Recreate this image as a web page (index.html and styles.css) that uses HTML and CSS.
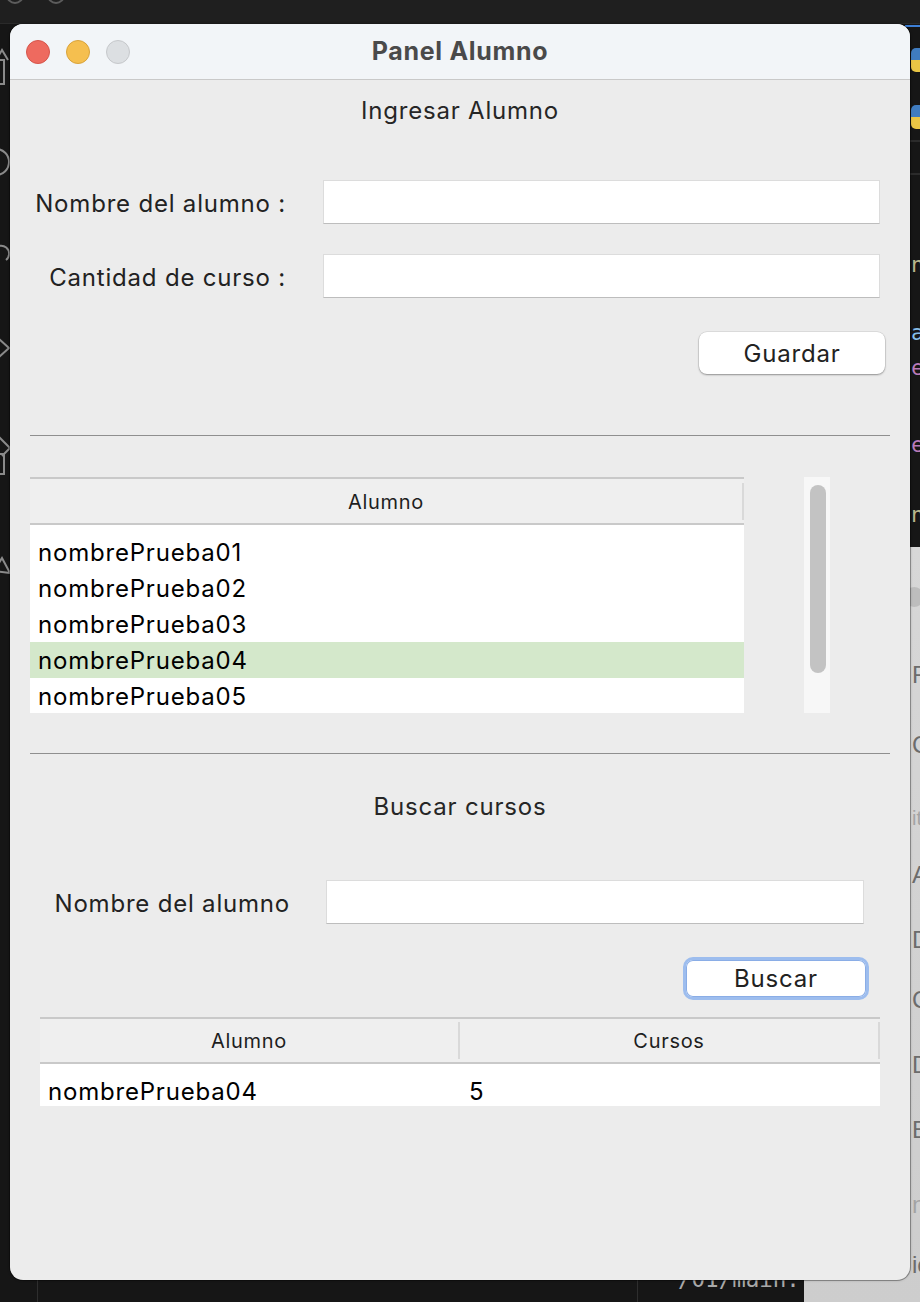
FILE: index.html
```html
<!DOCTYPE html>
<html lang="es">
<head>
<meta charset="utf-8">
<title>Panel Alumno</title>
<link rel="stylesheet" href="styles.css">
</head>
<body>
<div class="desktop">
  <div class="topstrip"></div>
  <svg class="topdots" width="80" height="6" viewBox="0 0 80 6"><circle cx="15" cy="-5" r="8" fill="none" stroke="#5c5c5c" stroke-width="2"/><circle cx="56" cy="-5" r="8" fill="none" stroke="#5c5c5c" stroke-width="2"/></svg>
  <svg class="activity" width="12" height="600" viewBox="0 0 12 600">
    <g fill="none" stroke="#8a8a8a" stroke-width="2">
      <path d="M-4 36 L2 26 L8 36"/>
      <rect x="-8" y="36" width="12" height="24"/>
      <circle cx="-4" cy="138" r="13"/>
      <path d="M-6 226 A8 8 0 1 1 6 236"/>
      <path d="M-2 314 L9 324 L-2 334"/>
      <path d="M-2 412 L10 424 L2 432"/>
      <rect x="-8" y="430" width="12" height="20"/>
      <path d="M-6 547 L2 534 L10 549 Z"/>
    </g>
  </svg>
  <div class="tabline"></div>
  <div class="pyicon pyicon-a"><span class="py-blue"></span><span class="py-yellow"></span></div>
  <div class="pyicon pyicon-b"><span class="py-blue"></span><span class="py-yellow"></span></div>
  <div class="edline edline-a"></div>
  <div class="edline edline-b"></div>
  <span class="code c-olive c1">n</span>
  <span class="code c-blue c2">a</span>
  <span class="code c-purple c3">e</span>
  <span class="code c-purple c4">e</span>
  <span class="code c-olive c5">n</span>
  <div class="vline vline-a"></div>
  <div class="vline vline-b"></div>
  <span class="term">/01/main.</span>
  <div class="sidepanel">
    <span class="sp-dot"></span>
    <span class="sp s1">F</span>
    <span class="sp s2">C</span>
    <span class="sp sp-light s3">it</span>
    <span class="sp s4">A</span>
    <span class="sp s5">D</span>
    <span class="sp s6">C</span>
    <span class="sp s7">D</span>
    <span class="sp s8">E</span>
    <span class="sp sp-light s9">nc</span>
    <span class="sp s10">ic</span>
  </div>

  <div class="window">
    <div class="titlebar">
      <div class="lights">
        <span class="light light-close"></span>
        <span class="light light-min"></span>
        <span class="light light-max"></span>
      </div>
      <div class="title">Panel Alumno</div>
      <div></div>
    </div>
    <div class="content">
      <div class="section-title">Ingresar Alumno</div>

      <div class="form-row form-row-first">
        <label class="label">Nombre del alumno :</label>
        <div class="input"></div>
      </div>
      <div class="form-row form-row-second">
        <label class="label">Cantidad de curso :</label>
        <div class="input"></div>
      </div>
      <div class="actions actions-save">
        <div class="btn">Guardar</div>
      </div>

      <div class="sep sep-first"></div>

      <div class="list-area">
        <div class="table table-list">
          <div class="thead">
            <div class="th th-full">Alumno</div>
          </div>
          <div class="tbody tbody-list">
            <div class="row">nombrePrueba01</div>
            <div class="row">nombrePrueba02</div>
            <div class="row">nombrePrueba03</div>
            <div class="row row-selected">nombrePrueba04</div>
            <div class="row">nombrePrueba05</div>
          </div>
        </div>
        <div class="track"><div class="thumb"></div></div>
      </div>

      <div class="sep sep-second"></div>

      <div class="section-title section-title-search">Buscar cursos</div>

      <div class="form-row form-row-search">
        <label class="label">Nombre del alumno</label>
        <div class="input"></div>
      </div>
      <div class="actions actions-search">
        <div class="btn btn-focus">Buscar</div>
      </div>

      <div class="table table-result">
        <div class="thead">
          <div class="th th-half">Alumno</div>
          <div class="th th-half">Cursos</div>
        </div>
        <div class="tbody tbody-result">
          <div class="row row-cells">
            <span class="cell cell-name">nombrePrueba04</span>
            <span class="cell cell-count">5</span>
          </div>
        </div>
      </div>
    </div>
  </div>
</div>
</body>
</html>
```
FILE: styles.css
```css
* { box-sizing: border-box; }
html, body { margin: 0; padding: 0; }
body { background: #151515; overflow: hidden; }

.desktop {
  position: relative;
  width: 920px;
  height: 1302px;
  background: #161616;
  overflow: hidden;
  font-family: Inter, "Liberation Sans", sans-serif;
}
.topstrip { height: 24px; background: #1f1f1f; border-bottom: 1px solid #2a2a2a; }
.topdots { position: absolute; left: 0; top: 0; }
.activity { position: absolute; left: 0; top: 24px; }

.tabline { position: absolute; left: 905px; top: 25px; width: 15px; height: 2px; background: #3d7fd6; }
.pyicon { position: absolute; left: 911px; width: 14px; display: flex; flex-direction: column; }
.pyicon-a { top: 48px; }
.pyicon-b { top: 105px; }
.py-blue { height: 12px; background: #3f7cc0; border-radius: 5px 5px 0 0; }
.py-yellow { height: 12px; background: #e9c545; border-radius: 0 0 5px 5px; }
.edline { position: absolute; left: 910px; width: 10px; height: 2px; background: #2b2b2b; }
.edline-a { top: 140px; }
.edline-b { top: 173px; }
.code { position: absolute; left: 911px; font-family: "DejaVu Sans Mono", monospace; font-size: 22px; line-height: 24px; }
.c-olive { color: #b7b58c; }
.c-blue { color: #86bde8; }
.c-purple { color: #b97ab9; }
.c1 { top: 253px; }
.c2 { top: 321px; }
.c3 { top: 356px; }
.c4 { top: 433px; }
.c5 { top: 503px; }

.vline { position: absolute; top: 900px; bottom: 0; width: 1px; background: #2e2e2e; }
.vline-a { left: 37px; }
.vline-b { left: 637px; }
.term {
  position: absolute; left: 678px; top: 1264px;
  font-family: "DejaVu Sans Mono", monospace; font-size: 22.5px; line-height: 30px;
  color: #a9a9a9;
}

.sidepanel {
  position: absolute; left: 804px; top: 547px; right: 0; bottom: 0;
  background: linear-gradient(180deg, #d7d7d7, #cdcdcd);
}
.sp-dot { position: absolute; left: 100px; top: 40px; width: 20px; height: 20px; border-radius: 50%; background: #bdbdbd; }
.sp { position: absolute; left: 108px; font-family: "Liberation Sans", sans-serif; font-size: 24px; line-height: 28px; color: #6c6c6c; }
.sp-light { color: #a3a3a3; }
.s1 { top: 114px; }
.s2 { top: 184px; }
.s3 { top: 257px; font-size: 20px; }
.s4 { top: 314px; }
.s5 { top: 379px; }
.s6 { top: 439px; }
.s7 { top: 504px; }
.s8 { top: 569px; }
.s9 { top: 644px; }
.s10 { top: 704px; }

/* Window */
.window {
  position: absolute;
  left: 10px; top: 24px;
  width: 900px; height: 1256px;
  background: #ececec;
  border-radius: 13px;
  overflow: hidden;
  box-shadow: 0 0 0 1px rgba(0,0,0,0.28), 0 0 3px rgba(0,0,0,0.35);
}
.titlebar {
  height: 56px;
  background: #f2f5f8;
  border-bottom: 1px solid #c9c9c9;
  display: grid;
  grid-template-columns: 1fr auto 1fr;
  align-items: center;
}
.lights { display: flex; gap: 16px; padding-left: 16px; }
.light { width: 24px; height: 24px; border-radius: 50%; }
.light-close { background: #ee6a5f; border: 1px solid #d6554b; }
.light-min { background: #f5bf4f; border: 1px solid #d9a33b; }
.light-max { background: #dcdfe2; border: 1px solid #c6c8cb; }
.title {
  font-size: 25px; font-weight: 700; color: #4a4a4a;
  letter-spacing: 0.7px;
  padding-bottom: 2px;
}

.content { color: #222222; font-size: 24px; letter-spacing: 0.8px; }

.section-title {
  margin-top: 15px;
  height: 30px; line-height: 32px;
  text-align: center;
  color: #262626;
}
.section-title-search { margin-top: 37px; }

.form-row {
  display: grid;
  grid-template-columns: 256px 557px;
  column-gap: 37px;
  align-items: center;
  padding-left: 20px;
  height: 44px;
}
.form-row-first { margin-top: 55px; }
.form-row-second { margin-top: 30px; }
.form-row-search {
  margin-top: 59px;
  grid-template-columns: 260px 538px;
  column-gap: 36px;
}
.label { text-align: right; color: #222; white-space: nowrap; padding-top: 2px; }
.input {
  height: 44px;
  background: #ffffff;
  border: 1px solid #dcdcdc;
  border-bottom-color: #bdbdbd;
}

.actions { display: flex; justify-content: flex-end; }
.actions-save { margin-top: 34px; padding-right: 25px; }
.actions-search { margin-top: 33px; padding-right: 41px; }
.btn {
  width: 186px; height: 42px;
  background: #ffffff;
  border-radius: 8px;
  box-shadow: 0 0 0 0.5px rgba(0,0,0,0.12), 0 1px 2px rgba(0,0,0,0.35);
  display: flex; align-items: center; justify-content: center;
  color: #222;
}
.btn-focus {
  height: 43px;
  border: 3px solid #9dbdee;
  border-radius: 10px;
  box-shadow: inset 0 0 0 1px #8aade6;
}

.sep { height: 1px; background: #8f8f8f; margin: 0 20px; }
.sep-first { margin-top: 61px; }
.sep-second { margin-top: 40px; }

.list-area {
  margin-top: 41px;
  padding-left: 20px;
  height: 236px;
  display: flex;
  gap: 60px;
}
.table { display: flex; flex-direction: column; }
.table-list { width: 714px; }
.thead {
  display: flex;
  align-items: center;
  background: #efefef;
  border-top: 2px solid #c9c9c9;
  border-bottom: 2px solid #c9c9c9;
  height: 48px;
  font-size: 20px;
  letter-spacing: 0.7px;
  color: #1e1e1e;
}
.th {
  height: 37px;
  line-height: 38px;
  text-align: center;
  border-right: 2px solid #d9d9d9;
}
.th-full { width: 714px; }
.th-half { width: 420px; }
.tbody { background: #ffffff; overflow: hidden; }
.tbody-list { height: 188px; padding-top: 9px; }
.row { height: 36px; line-height: 38px; padding-left: 8px; color: #000; white-space: nowrap; }
.row-selected { background: #d4e8cb; }
.track {
  width: 26px; height: 236px;
  background: #f7f7f7;
  padding: 8px 0 0 6px;
}
.thumb { width: 16px; height: 188px; background: #c3c3c3; border-radius: 8px; }

.table-result { margin-top: 17px; margin-left: 30px; width: 840px; }
.table-result .thead { height: 47px; }
.tbody-result { height: 42px; padding-top: 9px; }
.row-cells { display: flex; padding-left: 0; }
.cell-name { width: 420px; padding-left: 8px; }
.cell-count { padding-left: 9px; }
```
